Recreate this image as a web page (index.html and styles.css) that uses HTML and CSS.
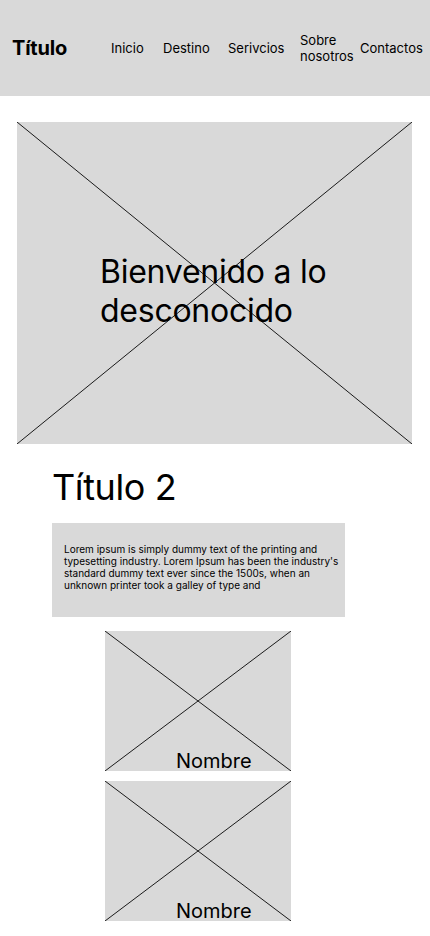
FILE: index.html
```html
<!DOCTYPE html>
<html lang="es">
<head>
  <meta charset="UTF-8">
  <meta name="viewport" content="width=device-width, initial-scale=1.0">
  <title>Título</title>
  <link rel="stylesheet" href="styles.css">
</head>
<body>
  <!-- Header -->
  <header>
    <div class="logo">Título</div>
    <nav class="nav-links">
      <a href="#" class="w-inicio">Inicio</a>
      <a href="#" class="w-destino">Destino</a>
      <a href="#" class="w-servicios">Serivcios</a>
      <a href="#" class="w-sobre">Sobre nosotros</a>
      <a href="#">Contactos</a>
    </nav>
  </header>

  <!-- Hero -->
  <section class="hero placeholder">
    <svg class="cross" viewBox="0 0 100 100" preserveAspectRatio="none">
      <line x1="0" y1="0" x2="100" y2="100" vector-effect="non-scaling-stroke"/>
      <line x1="100" y1="0" x2="0" y2="100" vector-effect="non-scaling-stroke"/>
    </svg>
    <h1>Bienvenido a lo desconocido</h1>
  </section>

  <!-- Content -->
  <section class="content">
    <h2>Título 2</h2>
    <div class="text-box">
      <p>Lorem ipsum is simply dummy text of the printing and typesetting industry. Lorem Ipsum has been the industry's standard dummy text ever since the 1500s, when an unknown printer took a galley of type and</p>
    </div>
  </section>

  <!-- Cards -->
  <section class="cards">
    <div class="card placeholder">
      <svg class="cross" viewBox="0 0 100 100" preserveAspectRatio="none">
        <line x1="0" y1="0" x2="100" y2="100" vector-effect="non-scaling-stroke"/>
        <line x1="100" y1="0" x2="0" y2="100" vector-effect="non-scaling-stroke"/>
      </svg>
      <span class="card-name">Nombre</span>
    </div>
    <div class="card placeholder">
      <svg class="cross" viewBox="0 0 100 100" preserveAspectRatio="none">
        <line x1="0" y1="0" x2="100" y2="100" vector-effect="non-scaling-stroke"/>
        <line x1="100" y1="0" x2="0" y2="100" vector-effect="non-scaling-stroke"/>
      </svg>
      <span class="card-name">Nombre</span>
    </div>
  </section>
</body>
</html>
```

FILE: styles.css
```css
/* Reset and Global Styles */
* {
  margin: 0;
  padding: 0;
  box-sizing: border-box;
}
body {
  font-family: Inter, "Liberation Sans", Arial, sans-serif;
  color: #000;
  background-color: #fff;
}

/* Header */
header {
  height: 96px;
  background-color: #d9d9d9;
  padding-left: 12px;
  display: flex;
  align-items: center;
}
header .logo {
  flex: 0 0 99px;
  font-size: 20px;
  font-weight: bold;
  letter-spacing: -0.2px;
}
header .nav-links {
  display: flex;
  align-items: center;
  padding-top: 1px;
}
header .nav-links a {
  color: #000;
  text-decoration: none;
  font-size: 13px;
  line-height: 15.5px;
}
.w-inicio { width: 52px; }
.w-destino { width: 65px; }
.w-servicios { width: 72px; }
.w-sobre { width: 60px; }

/* Placeholder boxes */
.placeholder {
  position: relative;
  background-color: #d9d9d9;
}
.placeholder .cross {
  position: absolute;
  top: 0;
  left: 0;
  width: 100%;
  height: 100%;
}
.placeholder .cross line {
  stroke: #1a1a1a;
  stroke-width: 1;
}

/* Hero */
.hero {
  margin: 26px 0 0 17px;
  width: 395px;
  height: 322px;
  padding: 130px 0 0 83px;
}
.hero h1 {
  position: relative;
  font-size: 32px;
  font-weight: normal;
  letter-spacing: -0.25px;
  width: 260px;
}

/* Content */
.content {
  padding: 21px 0 0 52px;
}
.content h2 {
  font-size: 36px;
  font-weight: normal;
  letter-spacing: -0.4px;
}
.text-box {
  margin-top: 14px;
  width: 293px;
  height: 94px;
  background-color: #d9d9d9;
  padding: 20px 5px 0 12px;
}
.text-box p {
  font-size: 10px;
  line-height: 12px;
}

/* Cards */
.cards {
  padding: 14px 0 0 105px;
  display: flex;
  flex-direction: column;
  gap: 10px;
}
.card {
  width: 186px;
  height: 140px;
  display: flex;
  align-items: flex-end;
  padding-left: 71px;
}
.card-name {
  position: relative;
  font-size: 20px;
  line-height: 20px;
}
```
